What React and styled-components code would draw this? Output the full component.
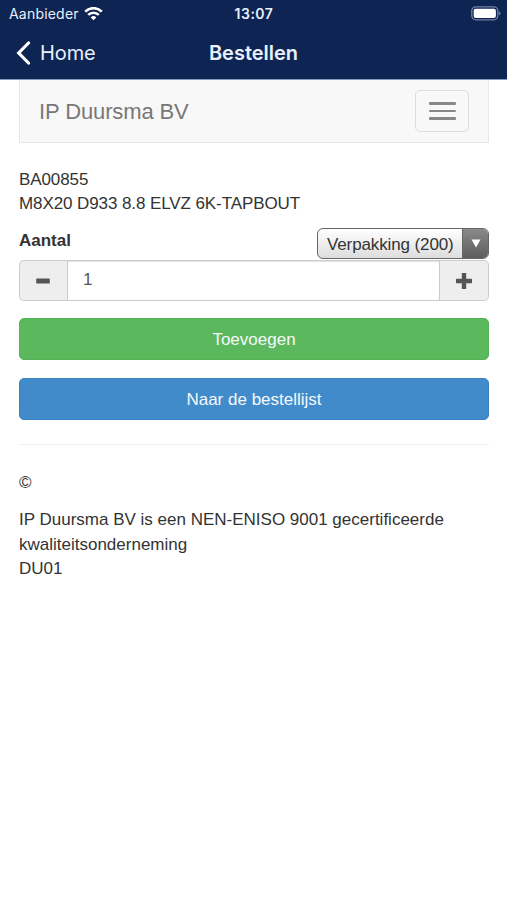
import React, { Component } from 'react'
import styled, { createGlobalStyle } from 'styled-components'

const GlobalStyle = createGlobalStyle`
    * {
        box-sizing: border-box;
    }

    body {
        margin: 0;
        background: #fff;
        color: #333;
        font-family: 'Liberation Sans', Arial, sans-serif;
        font-size: 17px;
        line-height: 24.4px;
    }

    button,
    input {
        font: inherit;
    }
`

const Header = styled.header`
    height: 80px;
    border-bottom: 1px solid #8199bd;
    background: #0e2453;
    color: #e9f0fb;
    font-family: Inter, 'Liberation Sans', sans-serif;
`

const StatusBar = styled.div`
    display: grid;
    grid-template-columns: 1fr auto 1fr;
    align-items: center;
    height: 27px;
    padding: 0 6px 0 9px;
    font-size: 14px;
    line-height: 27px;
`

const Carrier = styled.div`
    display: flex;
    align-items: center;
    gap: 5px;
    letter-spacing: 0.2px;
`

const Time = styled.div`
    margin-right: 2px;
    font-weight: 600;
    letter-spacing: 0.5px;
`

const Battery = styled.svg`
    justify-self: end;
`

const TitleBar = styled.div`
    display: grid;
    grid-template-columns: 1fr auto 1fr;
    align-items: center;
    height: 52px;
    padding: 0 16px;
`

const BackButton = styled.button`
    display: flex;
    align-items: center;
    gap: 9px;
    padding: 0;
    border: 0;
    background: none;
    color: inherit;
    font-size: 20px;
    letter-spacing: -0.1px;
`

const Title = styled.h1`
    margin: 0;
    font-size: 20px;
    font-weight: 600;
    letter-spacing: 0;
`

const Container = styled.main`
    padding: 0 18px 0 19px;
`

const Navbar = styled.nav`
    display: flex;
    align-items: center;
    justify-content: space-between;
    height: 63px;
    margin-bottom: 25px;
    padding: 0 19px;
    border: 1px solid #e7e7e7;
    border-top: 0;
    background: #f8f8f8;
`

const Brand = styled.span`
    padding-top: 2px;
    color: #777;
    font-size: 22px;
    letter-spacing: -0.12px;
`

const Toggle = styled.button`
    display: flex;
    flex-direction: column;
    align-items: center;
    justify-content: center;
    gap: 5px;
    width: 54px;
    height: 42px;
    border: 1px solid #ddd;
    border-radius: 5px;
    background: transparent;
`

const ToggleBar = styled.span`
    width: 27px;
    height: 2.5px;
    border-radius: 1px;
    background: #888;
`

const Text = styled.p`
    margin: 0 0 13px;
`

const Product = styled(Text)`
    margin-bottom: 11px;
    letter-spacing: -0.09px;
`

const FieldHeader = styled.div`
    display: flex;
    justify-content: space-between;
    height: 32px;
`

const Label = styled.label`
    padding-top: 1px;
    font-weight: bold;
`

const Select = styled.button`
    display: flex;
    width: 172px;
    height: 31px;
    padding: 0;
    overflow: hidden;
    border: 1px solid #666;
    border-radius: 6px;
    background: linear-gradient(#fff, #ddd);
    color: #333;
    line-height: 31px;
`

const SelectText = styled.span`
    flex: 1;
    padding-left: 9px;
    letter-spacing: -0.12px;
    text-align: left;
    white-space: nowrap;
`

const SelectArrow = styled.span`
    display: flex;
    align-items: center;
    justify-content: center;
    width: 26px;
    border-left: 1px solid #666;
    background: linear-gradient(#8a8a8a, #5d5d5d);
`

const InputGroup = styled.div`
    display: flex;
    height: 41px;
    margin-bottom: 17px;
`

const Addon = styled.button`
    display: flex;
    align-items: center;
    justify-content: center;
    width: ${props => (props.$right ? '49px' : '48px')};
    padding: 2px 1px 0 0;
    border: 1px solid #ccc;
    border-width: ${props => (props.$right ? '1px 1px 1px 0' : '1px 0 1px 1px')};
    border-radius: ${props => (props.$right ? '0 5px 5px 0' : '5px 0 0 5px')};
    background: #eee;
`

const InputText = styled.input`
    flex: 1;
    min-width: 0;
    padding: 0 15px;
    border: 1px solid #ccc;
    border-radius: 0;
    outline: none;
    background: #fff;
    box-shadow: inset 0 1px 1px rgba(0, 0, 0, 0.12);
    color: #555;
`

const Button = styled.button`
    display: block;
    width: 100%;
    height: 42px;
    margin-bottom: 18px;
    padding: 2px 0 0;
    border: 1px solid ${props => (props.$primary ? '#3a84c3' : '#54b354')};
    border-radius: 5px;
    background: ${props => (props.$primary ? '#428bca' : '#5cb85c')};
    color: #f4f9fd;
`

const Divider = styled.hr`
    margin: 24px 0 26px;
    border: 0;
    border-top: 1px solid #eee;
`

class App extends Component {
    constructor(props) {
        super(props)

        this.state = {
            amount: 1,
        }
    }

    handleChangeAmount = event => {
        this.setState({ amount: event.target.value })
    }

    handleStep = step => {
        this.setState(({ amount }) => ({
            amount: Math.max(1, Number(amount) + step),
        }))
    }

    render() {
        const { amount } = this.state
        return (
            <>
                <GlobalStyle />
                <Header>
                    <StatusBar>
                        <Carrier>
                            Aanbieder
                            <svg width="19" height="14" viewBox="0 0 19 14" fill="none" stroke="#fff" strokeWidth="2.6">
                                <path d="M1.2 4.6a11.8 11.8 0 0 1 16.6 0" />
                                <path d="M4.2 7.9a7.5 7.5 0 0 1 10.6 0" />
                                <path d="M6.7 10.4a4 4 0 0 1 5.6 0L9.5 13.3z" fill="#fff" stroke="none" />
                            </svg>
                        </Carrier>
                        <Time>13:07</Time>
                        <Battery width="30" height="15" viewBox="0 0 30 15">
                            <rect x="0.8" y="0.8" width="26" height="13" rx="4" fill="none" stroke="#7480a0" strokeWidth="1.3" />
                            <rect x="2.7" y="2.7" width="22.2" height="9.2" rx="2" fill="#fff" />
                            <path d="M28 5.2q3 2.1 0 4.2z" fill="#7480a0" />
                        </Battery>
                    </StatusBar>
                    <TitleBar>
                        <BackButton>
                            <svg width="15" height="24" viewBox="0 0 15 24" fill="none" stroke="#fff" strokeWidth="3.2" strokeLinecap="round">
                                <path d="M12.5 2L2.700 12l9.800 10" />
                            </svg>
                            Home
                        </BackButton>
                        <Title>Bestellen</Title>
                    </TitleBar>
                </Header>

                <Container>
                    <Navbar>
                        <Brand>IP Duursma BV</Brand>
                        <Toggle aria-label="Menu">
                            <ToggleBar />
                            <ToggleBar />
                            <ToggleBar />
                        </Toggle>
                    </Navbar>

                    <Product>
                        BA00855
                        <br />
                        M8X20 D933 8.8 ELVZ 6K-TAPBOUT
                    </Product>

                    <FieldHeader>
                        <Label htmlFor="amount">Aantal</Label>
                        <Select>
                            <SelectText>Verpakking (200)</SelectText>
                            <SelectArrow>
                                <svg width="10" height="9" viewBox="0 0 10 9">
                                    <path d="M0.5 0.5h9L5 8.5z" fill="#fff" />
                                </svg>
                            </SelectArrow>
                        </Select>
                    </FieldHeader>

                    <InputGroup>
                        <Addon aria-label="Minder" onClick={() => this.handleStep(-1)}>
                            <svg width="16" height="16" viewBox="0 0 16 16">
                                <rect x="1.2" y="5.5" width="13.6" height="5" rx="0.6" fill="#555" />
                            </svg>
                        </Addon>
                        <InputText
                            id="amount"
                            type="text"
                            value={amount}
                            onChange={this.handleChangeAmount}
                        />
                        <Addon $right aria-label="Meer" onClick={() => this.handleStep(1)}>
                            <svg width="16" height="16" viewBox="0 0 16 16" fill="#555">
                                <rect x="0" y="5.8" width="16" height="4.4" rx="0.6" />
                                <rect x="5.8" y="0" width="4.4" height="16" rx="0.6" />
                            </svg>
                        </Addon>
                    </InputGroup>

                    <Button>Toevoegen</Button>
                    <Button $primary>Naar de bestellijst</Button>

                    <Divider />

                    <Text>©</Text>
                    <Text>
                        IP Duursma BV is een NEN-ENISO 9001 gecertificeerde kwaliteitsonderneming
                        <br />
                        DU01
                    </Text>
                </Container>
            </>
        )
    }
}

export default App
